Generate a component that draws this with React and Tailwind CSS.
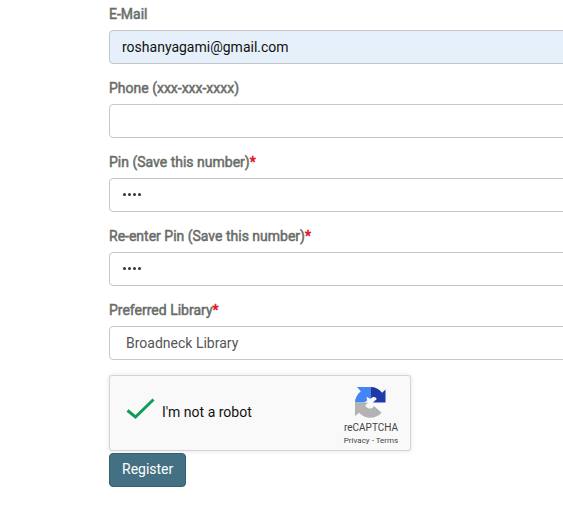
const labelClass = 'block h-5 mb-[5px] text-sm leading-[19px] font-normal [-webkit-text-stroke:0.5px_currentColor] text-[#696d68] whitespace-nowrap';
const controlClass = 'block w-full h-[34px] px-3 py-1.5 rounded border border-[#c4c6c8] text-sm leading-5 outline-none';

function Field({ label, required, children }) {
  return (
    <div className="mb-[15px]">
      <label className={labelClass}>
        {label}
        {required && <span className="text-[#e0101c]">*</span>}
      </label>
      {children}
    </div>
  );
}

function PinDots() {
  return (
    <div className={`${controlClass} bg-white flex items-center gap-[2px]`}>
      {[1, 2, 3, 4].map((i) => (
        <span key={i} className="w-[3px] h-[3px] first:ml-px -mt-px rounded-full bg-[#333]" />
      ))}
    </div>
  );
}

function RecaptchaLogo() {
  return (
    <svg className="mr-px" width="31" height="31" viewBox="0 0 64 64">
      <path fill="#4285f4" d="M4 0H32V25L24 20L25 28L19 32H0C0 23 5 15 12 9Z" />
      <path fill="#1c3aa9" d="M32 0C42 0 50 4 56 12L63 5V32H37L45 25C43 20 37 19 32 24Z" />
      <path fill="#b3b3b3" d="M0 32H27L21 38C25 46 35 47 39 39L55 53C42 67 20 67 9 53L0 60Z" />
    </svg>
  );
}

function Recaptcha() {
  return (
    <div className="flex w-[302px] h-[76px] mb-[2px] rounded-[3px] border border-[#d3d3d3] bg-[#f9f9f9] shadow-[0_0_4px_1px_rgba(0,0,0,0.08)]">
      <svg className="mt-[19px] ml-[15px] shrink-0" width="32" height="28" viewBox="0 0 32 28" fill="none">
        <path d="M2.5 15.5L10.5 22L28.5 4.5" stroke="#0f9d58" strokeWidth="3" />
      </svg>
      <span className="mt-[28px] ml-[5px] text-sm leading-[17px] text-[#111]">I'm not a robot</span>
      <div className="flex flex-col items-center w-[70px] ml-auto mr-[4px] pt-[11px] text-[#444]">
        <RecaptchaLogo />
        <span className="mt-[4px] text-[10px] leading-3">reCAPTCHA</span>
        <span className="mt-[2px] text-[8px] leading-[10px] whitespace-nowrap">Privacy - Terms</span>
      </div>
    </div>
  );
}

export default function App() {
  return (
    <div className="w-full h-[508px] overflow-hidden bg-white font-['Roboto',sans-serif]">
      <form className="w-[600px] ml-[109px] pt-[5px]">
        <Field label="E-Mail">
          <div className={`${controlClass} bg-[#e5f0fa] text-[#111]`}>roshanyagami@gmail.com</div>
        </Field>
        <Field label="Phone (xxx-xxx-xxxx)">
          <input className={`${controlClass} bg-white`} type="text" />
        </Field>
        <Field label="Pin (Save this number)" required>
          <PinDots />
        </Field>
        <Field label="Re-enter Pin (Save this number)" required>
          <PinDots />
        </Field>
        <Field label="Preferred Library" required>
          <div className={`${controlClass} bg-white pl-4 text-[#555]`}>Broadneck Library</div>
        </Field>
        <Recaptcha />
        <button type="button" className="block h-[34px] px-3 pb-[2px] rounded border border-[#365f70] bg-[#437082] text-sm leading-5 text-white">
          Register
        </button>
      </form>
    </div>
  );
}
